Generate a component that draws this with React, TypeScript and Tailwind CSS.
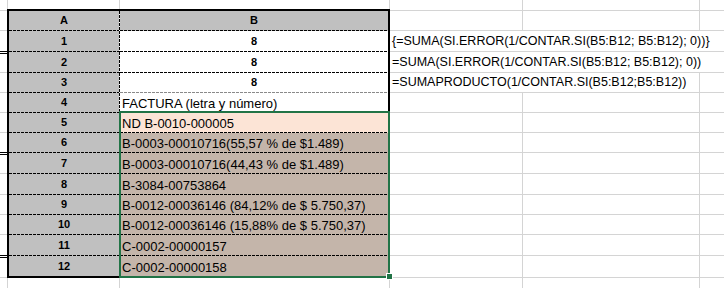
import React from "react"

type Row = { n: number; h: string; b: string; kind: "num" | "text"; bg: string; line?: string; last?: boolean }

const DASH_H = "bg-[image:repeating-linear-gradient(90deg,#000_0_3px,transparent_3px_4px)]"
const DASH_H_LIGHT = "bg-[image:repeating-linear-gradient(90deg,#8a8a8a_0_3px,transparent_3px_4px)]"
const DASH_V = "bg-[image:repeating-linear-gradient(180deg,#000_0_3px,transparent_3px_4px)]"

const rows: Row[] = [
  { n: 1, h: "h-[21px]", b: "8", kind: "num", bg: "bg-white" },
  { n: 2, h: "h-[21px]", b: "8", kind: "num", bg: "bg-white" },
  { n: 3, h: "h-[20px]", b: "8", kind: "num", bg: "bg-white", line: DASH_H_LIGHT },
  { n: 4, h: "h-[20px]", b: "FACTURA (letra y número)", kind: "text", bg: "bg-white" },
  { n: 5, h: "h-[20px]", b: "ND B-0010-000005", kind: "text", bg: "bg-[#fce4d6]" },
  { n: 6, h: "h-[20px]", b: "B-0003-00010716(55,57 % de $1.489)", kind: "text", bg: "bg-[#c4b5aa]" },
  { n: 7, h: "h-[21px]", b: "B-0003-00010716(44,43 % de $1.489)", kind: "text", bg: "bg-[#c4b5aa]" },
  { n: 8, h: "h-[21px]", b: "B-3084-00753864", kind: "text", bg: "bg-[#c4b5aa]" },
  { n: 9, h: "h-[20px]", b: "B-0012-00036146 (84,12% de $ 5.750,37)", kind: "text", bg: "bg-[#c4b5aa]" },
  { n: 10, h: "h-[20px]", b: "B-0012-00036146 (15,88% de $ 5.750,37)", kind: "text", bg: "bg-[#c4b5aa]" },
  { n: 11, h: "h-[21px]", b: "C-0002-00000157", kind: "text", bg: "bg-[#c4b5aa]" },
  { n: 12, h: "h-[20px]", b: "C-0002-00000158", kind: "text", bg: "bg-[#c4b5aa]", last: true },
]

// sheet rows outside the bordered block (same boundaries as the table rows)
const gridRows: { h: string; f?: string; span?: "all" | "cd"; last?: boolean }[] = [
  { h: "h-[11px]" },
  { h: "h-[20px]" },
  { h: "h-[21px]", f: "{=SUMA(SI.ERROR(1/CONTAR.SI(B5:B12; B5:B12); 0))}", span: "all" },
  { h: "h-[21px]", f: "=SUMA(SI.ERROR(1/CONTAR.SI(B5:B12; B5:B12); 0))", span: "all" },
  { h: "h-[20px]", f: "=SUMAPRODUCTO(1/CONTAR.SI(B5:B12;B5:B12))", span: "cd" },
  { h: "h-[20px]" },
  { h: "h-[20px]" },
  { h: "h-[20px]" },
  { h: "h-[21px]" },
  { h: "h-[21px]" },
  { h: "h-[20px]" },
  { h: "h-[20px]" },
  { h: "h-[21px]" },
  { h: "h-[22px]" },
  { h: "h-[10px]", last: true },
]

const markRows = [2, 7, 12]

const HDash = ({ cls = DASH_H }: { cls?: string }) => <div className={`h-px w-full shrink-0 ${cls}`} />

const SheetStrip = () => (
  <div className="flex h-[9px] shrink-0">
    <div className="w-[112px] border-l border-[#d4d4d4]" />
    <div className="flex-1 border-x border-[#d4d4d4]" />
  </div>
)

export default function App() {
  return (
    <div className="flex h-[288px] w-[724px] overflow-hidden bg-white text-black font-['Liberation_Sans',Arial,sans-serif]">
      {/* left edge of the sheet */}
      <div className="flex w-[7px] shrink-0 flex-col">
        {gridRows.map((r, i) => (
          <div
            key={i}
            className={`${r.h} shrink-0 ${
              markRows.includes(i) ? "border-b border-black" : r.last ? "" : "border-b border-[#d4d4d4]"
            }`}
          >
            {markRows.includes(i - 1) && <div className="mt-px h-px bg-black" />}
          </div>
        ))}
      </div>

      {/* bordered block A:B */}
      <div className="flex w-[383px] shrink-0 flex-col">
        <SheetStrip />
        <div className="relative border-2 border-black">
          <div className="flex h-[20px]">
            <div className="flex w-[110px] flex-col bg-[#c0c0c0]">
              <div className="flex flex-1 items-center justify-center text-[11px] font-bold">A</div>
              <HDash />
            </div>
            <div className={`w-px bg-white ${DASH_V}`} />
            <div className="flex flex-1 flex-col bg-[#c0c0c0]">
              <div className="flex flex-1 items-center justify-center text-[11px] font-bold">B</div>
              <HDash />
            </div>
          </div>
          {rows.map((r) => (
            <div key={r.n} className={`flex ${r.h}`}>
              <div className="flex w-[110px] flex-col bg-[#c0c0c0]">
                <div className="flex flex-1 items-center justify-center text-[11px] font-bold">{r.n}</div>
                {!r.last && <HDash />}
              </div>
              <div className={`w-px bg-white ${DASH_V}`} />
              <div className={`flex flex-1 flex-col ${r.bg}`}>
                {r.kind === "num" ? (
                  <div className="flex flex-1 items-center justify-center text-[11px] font-bold">{r.b}</div>
                ) : (
                  <div className="flex flex-1 items-end whitespace-nowrap pb-px pl-[2px] text-[13px] leading-[15px]">{r.b}</div>
                )}
                {!r.last && <HDash cls={r.line} />}
              </div>
            </div>
          ))}

          {/* selection B5:B12 */}
          <div className="absolute left-[110px] top-[100px] h-[167px] w-[271px] border-2 border-[#217346]" />
          <div className="absolute left-[377px] top-[262px] h-[7px] w-[7px] bg-white p-px">
            <div className="h-full w-full bg-[#217346]" />
          </div>
        </div>
        <div className="flex h-[10px] shrink-0">
          <div className="w-[112px] border-l border-[#d4d4d4]" />
          <div className="flex-1 border-x border-[#d4d4d4]" />
        </div>
      </div>

      {/* columns C, D, E */}
      <div className="flex flex-1 flex-col">
        {gridRows.map((r, i) => (
          <div key={i} className={`flex ${r.h} shrink-0 ${r.last ? "" : "border-b border-[#d4d4d4]"}`}>
            {r.span === "all" ? (
              <div className="flex flex-1 items-center whitespace-nowrap pl-[2px] text-[12.5px] leading-none">{r.f}</div>
            ) : r.span === "cd" ? (
              <>
                <div className="flex w-[310px] items-center whitespace-nowrap border-r border-[#d4d4d4] pl-[2px] text-[12.5px] leading-none">
                  {r.f}
                </div>
                <div className="flex-1" />
              </>
            ) : (
              <>
                <div className="w-[133px] border-r border-[#d4d4d4]" />
                <div className="w-[177px] border-r border-[#d4d4d4]" />
                <div className="flex-1" />
              </>
            )}
          </div>
        ))}
      </div>
    </div>
  )
}
